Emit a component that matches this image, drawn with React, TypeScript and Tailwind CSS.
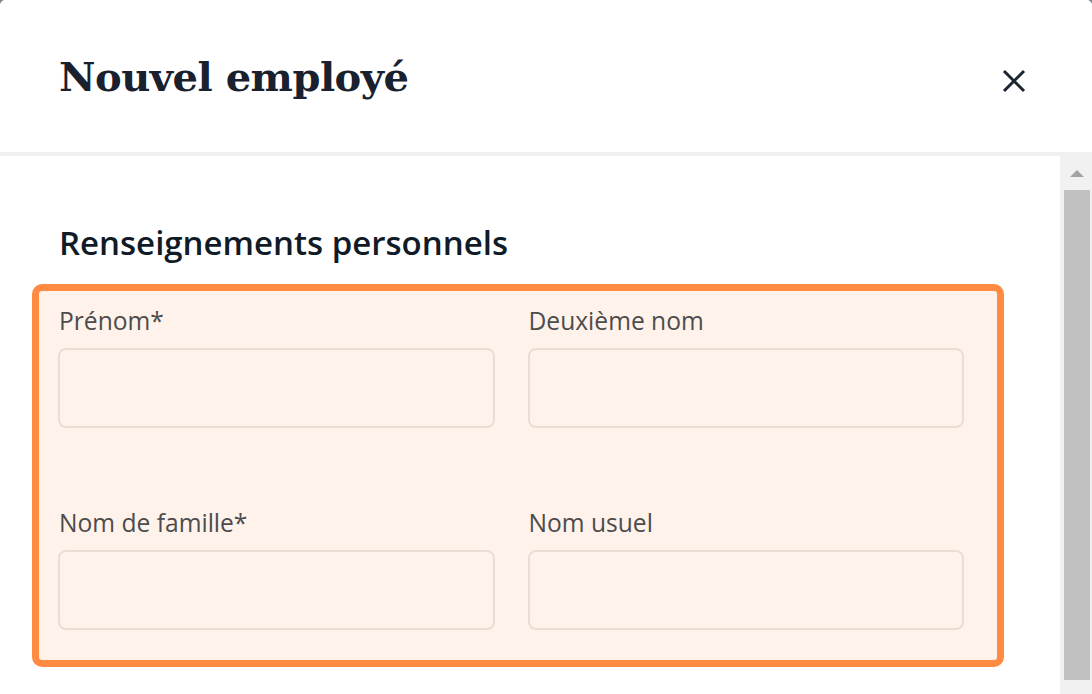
import React from 'react';

// Nouvel employé — modal with personal info section

const FIELDS: { label: string }[][] = [
  [{ label: 'Prénom*' }, { label: 'Deuxième nom' }],
  [{ label: 'Nom de famille*' }, { label: 'Nom usuel' }],
];

function CloseIcon() {
  return (
    <svg width="24" height="24" viewBox="0 0 24 24" className="mt-[17px] text-[#1b2430]">
      <path d="M2 2 L22 22 M22 2 L2 22" stroke="currentColor" strokeWidth="3" fill="none" />
    </svg>
  );
}

function Field({ label }: { label: string }) {
  return (
    <div className="flex flex-col">
      <label className="ml-[1px] text-[24.6px] leading-[33px] text-[#4c4c4c] font-['Open_Sans',sans-serif]">{label}</label>
      <div className="mt-[11px] h-[80px] rounded-[8px] border-2 border-[#ebddd3]" />
    </div>
  );
}

export default function App() {
  return (
    <div className="w-[1092px] h-[694px] bg-[#7b8088] overflow-hidden">
      <div className="w-full h-full bg-white rounded-t-[5px] flex flex-col overflow-hidden">
        {/* Header */}
        <div className="h-[152px] shrink-0 flex items-start justify-between pl-[59px] pr-[66px] pt-[52px]">
          <h1 className="text-[40px] leading-[49px] tracking-[-0.5px] font-bold text-[#18212d] font-['DejaVu_Serif',serif]">
            Nouvel employé
          </h1>
          <CloseIcon />
        </div>
        <div className="h-[4px] shrink-0 bg-[#eef0f2]" />

        {/* Body */}
        <div className="flex flex-1 min-h-0">
          <div className="flex-1 pl-[32px] pr-[56px] pt-[65px]">
            <h2 className="ml-[27px] mb-[19px] text-[33px] leading-[44px] font-semibold text-[#111a27] font-['Open_Sans',sans-serif]">
              Renseignements personnels
            </h2>
            <div className="rounded-[10px] border-[7px] border-[#ff8a42] bg-[#fff2eb] pl-[19px] pr-[33px] pt-[13px] pb-[30px]">
              <div className="grid grid-cols-2 gap-x-[33px] gap-y-[78px]">
                {FIELDS.flat().map((f) => (
                  <Field key={f.label} label={f.label} />
                ))}
              </div>
            </div>
          </div>

          {/* Scrollbar */}
          <div className="w-[32px] shrink-0 bg-[#f1f1f1] flex flex-col">
            <div className="h-[34px] flex items-center justify-center pl-[2px]">
              <div className="w-0 h-0 border-l-[7px] border-r-[7px] border-b-[7px] border-l-transparent border-r-transparent border-b-[#a3a3a3]" />
            </div>
            <div className="ml-[4px] w-[26px] h-[490px] bg-[#c1c1c1]" />
          </div>
        </div>
      </div>
    </div>
  );
}
